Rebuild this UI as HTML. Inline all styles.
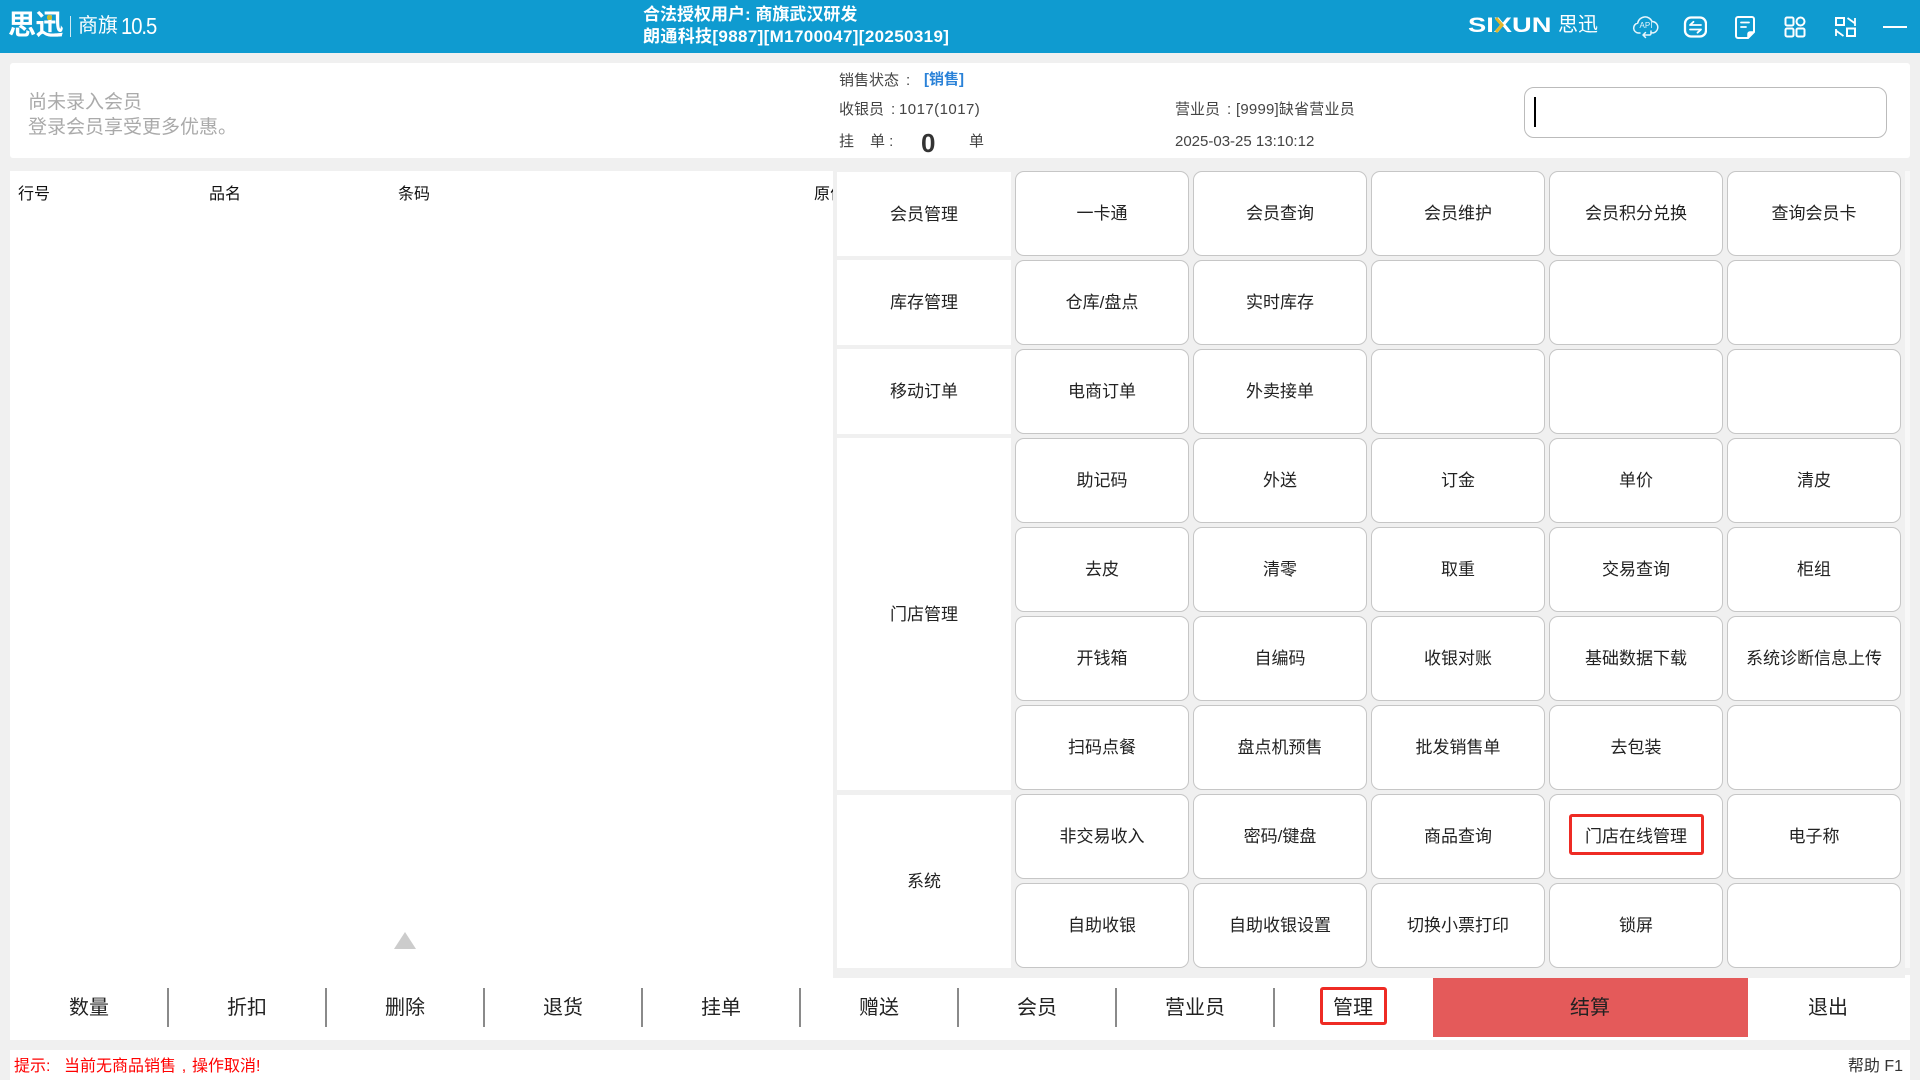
<!DOCTYPE html>
<html lang="zh"><head><meta charset="utf-8"><title>思迅商旗</title>
<style>
html,body{margin:0;padding:0}
body{width:1920px;height:1080px;position:relative;overflow:hidden;background:#f0f0f0;font-family:"Liberation Sans","Noto Sans CJK SC",sans-serif;color:#222}
div,span,svg{position:absolute;box-sizing:border-box}
.t{white-space:nowrap;line-height:1}
.hd{left:0;top:0;width:1920px;height:53px;background:#0f9bd0}
.w{background:#fff}
.b{width:174px;height:85px;background:#fff;border:1.5px solid #c6c6c6;border-radius:9px;display:flex;align-items:center;justify-content:center;font-size:17px;color:#222;padding-bottom:4px}
.c{left:837px;width:174px;background:#fff;display:flex;align-items:center;justify-content:center;font-size:17px;color:#222;padding-bottom:4px}
.s{top:988px;width:1.5px;height:39px;background:#8a8a8a}
.m{top:998px;width:120px;text-align:center;font-size:20px;line-height:20px;color:#222;white-space:nowrap}
.i{font-size:15px;color:#444;white-space:nowrap;line-height:1}
</style></head><body>
<div class="hd"></div>
<div class="t" style="left:8px;top:11px;font-size:28px;font-weight:700;color:#fff;letter-spacing:-.5px">思迅</div>
<div style="left:47px;top:15px;width:5px;height:5px;background:#c9b92e;border-radius:2px"></div>
<div style="left:70px;top:16px;width:1px;height:21px;background:#cfeaf5"></div>
<div class="t" style="left:78px;top:16px;font-size:20px;color:#fff">商旗</div>
<div class="t" style="left:121px;top:15px;font-size:23px;color:#fff;letter-spacing:-1.2px;transform-origin:0 50%;transform:scaleX(.88)">10.5</div>
<div class="t" style="left:643px;top:6px;font-size:17px;font-weight:700;color:#fff">合法授权用户: 商旗武汉研发</div>
<div class="t" style="left:643px;top:28px;font-size:17px;font-weight:700;color:#fff;letter-spacing:.35px">朗通科技[9887][M1700047][20250319]</div>
<div class="t" style="left:1468px;top:15px;font-size:21px;font-weight:700;color:#fff;transform-origin:0 50%;transform:scaleX(1.3)">SIXUN</div>
<svg style="left:1490px;top:15px" width="20" height="20" viewBox="0 0 20 20" fill="none"><rect x="3" y="1" width="11" height="18" fill="#0f9bd0" opacity="0"/><path d="M6 3l6 7-6 7" stroke="#e2b52b" stroke-width="3"/></svg>
<div class="t" style="left:1558px;top:15px;font-size:20px;font-weight:400;color:#fff">思迅</div>
<svg style="left:1632px;top:14px" width="28" height="26" viewBox="0 0 28 26" fill="none" stroke="#e8f6fc" stroke-width="1.5" stroke-linecap="round" stroke-linejoin="round"><path d="M8 19H6.5a5 5 0 0 1-.8-9.9A7.5 7.5 0 0 1 20 7.5a5.8 5.8 0 0 1 1.5 11.4H19"/><path d="M19 17v2.500a1.500 1.500 0 0 1-1.500 1.500H11M13.500 18.500 11 21l2.500 2.500"/><text x="14" y="14" font-size="8" font-family="Liberation Sans" fill="#e8f6fc" stroke="none" text-anchor="middle">API</text></svg>
<svg style="left:1683px;top:15px" width="24" height="24" viewBox="0 0 24 24" fill="none" stroke="#fff" stroke-width="2.300" stroke-linecap="round" stroke-linejoin="round"><rect x="2" y="2.500" width="21" height="19" rx="6"/><path d="M7 10h11M10.500 6.800 7 10M18 14.500H7M14.500 17.700 18 14.500" stroke-width="1.800"/></svg>
<svg style="left:1733px;top:14px" width="24" height="26" viewBox="0 0 24 26" fill="none" stroke="#fff" stroke-width="2" stroke-linecap="round" stroke-linejoin="round"><path d="M5 3h14a2 2 0 0 1 2 2v13l-6 6H5a2 2 0 0 1-2-2V5a2 2 0 0 1 2-2z"/><path d="M8 8.500h8M8 13h5" stroke-width="1.800"/><path d="M21 18h-4a2 2 0 0 0-2 2v3" fill="#fff" stroke-width="1.500"/></svg>
<svg style="left:1784px;top:16px" width="22" height="22" viewBox="0 0 22 22" fill="none" stroke="#fff" stroke-width="2"><rect x="1.500" y="1.500" width="8" height="8" rx="1.500"/><circle cx="16.500" cy="5.500" r="4"/><rect x="1.500" y="12.500" width="8" height="8" rx="1.500"/><rect x="12.500" y="12.500" width="8" height="8" rx="1.500"/></svg>
<svg style="left:1835px;top:16px" width="21" height="22" viewBox="0 0 21 22" fill="none" stroke="#fff" stroke-width="2"><rect x="1" y="2" width="8" height="7"/><rect x="12" y="12.500" width="8" height="7.500"/><path d="M12.500 2l7 5M20 2v8M8.500 20l-7-5M1 20v-7" stroke-width="1.800"/></svg>
<div style="left:1883px;top:26px;width:24px;height:2px;background:#fff"></div>

<div class="w" style="left:10px;top:63px;width:1900px;height:95px;border-radius:3px"></div>
<div class="t" style="left:28px;top:93px;font-size:19px;color:#aaa">尚未录入会员</div>
<div class="t" style="left:28px;top:118px;font-size:19px;color:#aaa">登录会员享受更多优惠。</div>
<div class="i" style="left:839px;top:73px">销售状态</div>
<div class="i" style="left:906px;top:73px">:</div>
<div class="i" style="left:924px;top:72px;color:#2a82d8;font-weight:700">[销售]</div>
<div class="i" style="left:839px;top:102px">收银员</div>
<div class="i" style="left:891px;top:102px">:</div>
<div class="i" style="left:899px;top:102px;letter-spacing:.45px">1017(1017)</div>
<div class="i" style="left:839px;top:134px">挂</div>
<div class="i" style="left:870px;top:134px">单 :</div>
<div class="t" style="left:921px;top:130px;font-size:26px;font-weight:700;color:#333">0</div>
<div class="i" style="left:969px;top:134px">单</div>
<div class="i" style="left:1175px;top:102px">营业员</div>
<div class="i" style="left:1227px;top:102px">:</div>
<div class="i" style="left:1236px;top:102px;letter-spacing:.2px">[9999]缺省营业员</div>
<div class="i" style="left:1175px;top:134px">2025-03-25 13:10:12</div>
<div class="w" style="left:1524px;top:87px;width:363px;height:51px;border:1px solid #bbb;border-radius:10px"></div>
<div style="left:1534px;top:97px;width:2px;height:30px;background:#000"></div>

<div class="w" style="left:10px;top:171px;width:823px;height:869px;overflow:hidden">
<div class="t" style="left:8px;top:16px;font-size:16px;color:#111">行号</div>
<div class="t" style="left:199px;top:16px;font-size:16px;color:#111">品名</div>
<div class="t" style="left:388px;top:16px;font-size:16px;color:#111">条码</div>
<div class="t" style="left:804px;top:16px;font-size:16px;color:#111">原价</div>
</div>
<div style="left:394px;top:932px;width:0;height:0;border-left:11.500px solid transparent;border-right:11.500px solid transparent;border-bottom:17px solid #ccc"></div>

<div class="c" style="top:172px;height:84px">会员管理</div>
<div class="c" style="top:260px;height:85px">库存管理</div>
<div class="c" style="top:349px;height:85px">移动订单</div>
<div class="c" style="top:438px;height:352px">门店管理</div>
<div class="c" style="top:795px;height:173px">系统</div>
<div style="left:1905px;top:171px;width:5px;height:797px;background:#f8f8f8"></div>

<div class="b" style="left:1015px;top:171px">一卡通</div><div class="b" style="left:1193px;top:171px">会员查询</div><div class="b" style="left:1371px;top:171px">会员维护</div><div class="b" style="left:1549px;top:171px">会员积分兑换</div><div class="b" style="left:1727px;top:171px">查询会员卡</div>
<div class="b" style="left:1015px;top:260px">仓库/盘点</div><div class="b" style="left:1193px;top:260px">实时库存</div><div class="b" style="left:1371px;top:260px"></div><div class="b" style="left:1549px;top:260px"></div><div class="b" style="left:1727px;top:260px"></div>
<div class="b" style="left:1015px;top:349px">电商订单</div><div class="b" style="left:1193px;top:349px">外卖接单</div><div class="b" style="left:1371px;top:349px"></div><div class="b" style="left:1549px;top:349px"></div><div class="b" style="left:1727px;top:349px"></div>
<div class="b" style="left:1015px;top:438px">助记码</div><div class="b" style="left:1193px;top:438px">外送</div><div class="b" style="left:1371px;top:438px">订金</div><div class="b" style="left:1549px;top:438px">单价</div><div class="b" style="left:1727px;top:438px">清皮</div>
<div class="b" style="left:1015px;top:527px">去皮</div><div class="b" style="left:1193px;top:527px">清零</div><div class="b" style="left:1371px;top:527px">取重</div><div class="b" style="left:1549px;top:527px">交易查询</div><div class="b" style="left:1727px;top:527px">柜组</div>
<div class="b" style="left:1015px;top:616px">开钱箱</div><div class="b" style="left:1193px;top:616px">自编码</div><div class="b" style="left:1371px;top:616px">收银对账</div><div class="b" style="left:1549px;top:616px">基础数据下载</div><div class="b" style="left:1727px;top:616px">系统诊断信息上传</div>
<div class="b" style="left:1015px;top:705px">扫码点餐</div><div class="b" style="left:1193px;top:705px">盘点机预售</div><div class="b" style="left:1371px;top:705px">批发销售单</div><div class="b" style="left:1549px;top:705px">去包装</div><div class="b" style="left:1727px;top:705px"></div>
<div class="b" style="left:1015px;top:794px">非交易收入</div><div class="b" style="left:1193px;top:794px">密码/键盘</div><div class="b" style="left:1371px;top:794px">商品查询</div><div class="b" style="left:1549px;top:794px">门店在线管理</div><div class="b" style="left:1727px;top:794px">电子称</div>
<div class="b" style="left:1015px;top:883px">自助收银</div><div class="b" style="left:1193px;top:883px">自助收银设置</div><div class="b" style="left:1371px;top:883px">切换小票打印</div><div class="b" style="left:1549px;top:883px">锁屏</div><div class="b" style="left:1727px;top:883px"></div>
<div style="left:1569px;top:814px;width:135px;height:41px;border:3px solid #ee2b24;border-radius:3px"></div>

<div class="w" style="left:833px;top:978px;width:1077px;height:62px"></div>
<div class="w" style="left:1905px;top:975px;width:5px;height:5px"></div>
<div class="s" style="left:167px"></div><div class="s" style="left:325px"></div><div class="s" style="left:483px"></div><div class="s" style="left:641px"></div><div class="s" style="left:799px"></div><div class="s" style="left:957px"></div><div class="s" style="left:1115px"></div><div class="s" style="left:1273px"></div>
<div class="m" style="left:29px">数量</div><div class="m" style="left:187px">折扣</div><div class="m" style="left:345px">删除</div><div class="m" style="left:503px">退货</div><div class="m" style="left:661px">挂单</div><div class="m" style="left:819px">赠送</div><div class="m" style="left:977px">会员</div><div class="m" style="left:1135px">营业员</div><div class="m" style="left:1293px">管理</div>
<div style="left:1320px;top:987px;width:67px;height:38px;border:3px solid #ee2b24;border-radius:3px"></div>
<div style="left:1433px;top:978px;width:315px;height:59px;background:#e45a5a"></div>
<div class="m" style="left:1530px">结算</div><div class="m" style="left:1768px">退出</div>

<div class="w" style="left:10px;top:1050px;width:1900px;height:30px"></div>
<div class="t" style="left:14px;top:1059px;font-size:16px;color:#f00">提示:</div>
<div class="t" style="left:64px;top:1059px;font-size:16px;color:#f00">当前无商品销售<span style="position:static;display:inline-block;width:16px;text-align:center">,</span>操作取消!</div>
<div class="t" style="right:17px;top:1059px;font-size:16px;color:#333">帮助 F1</div>
</body></html>
